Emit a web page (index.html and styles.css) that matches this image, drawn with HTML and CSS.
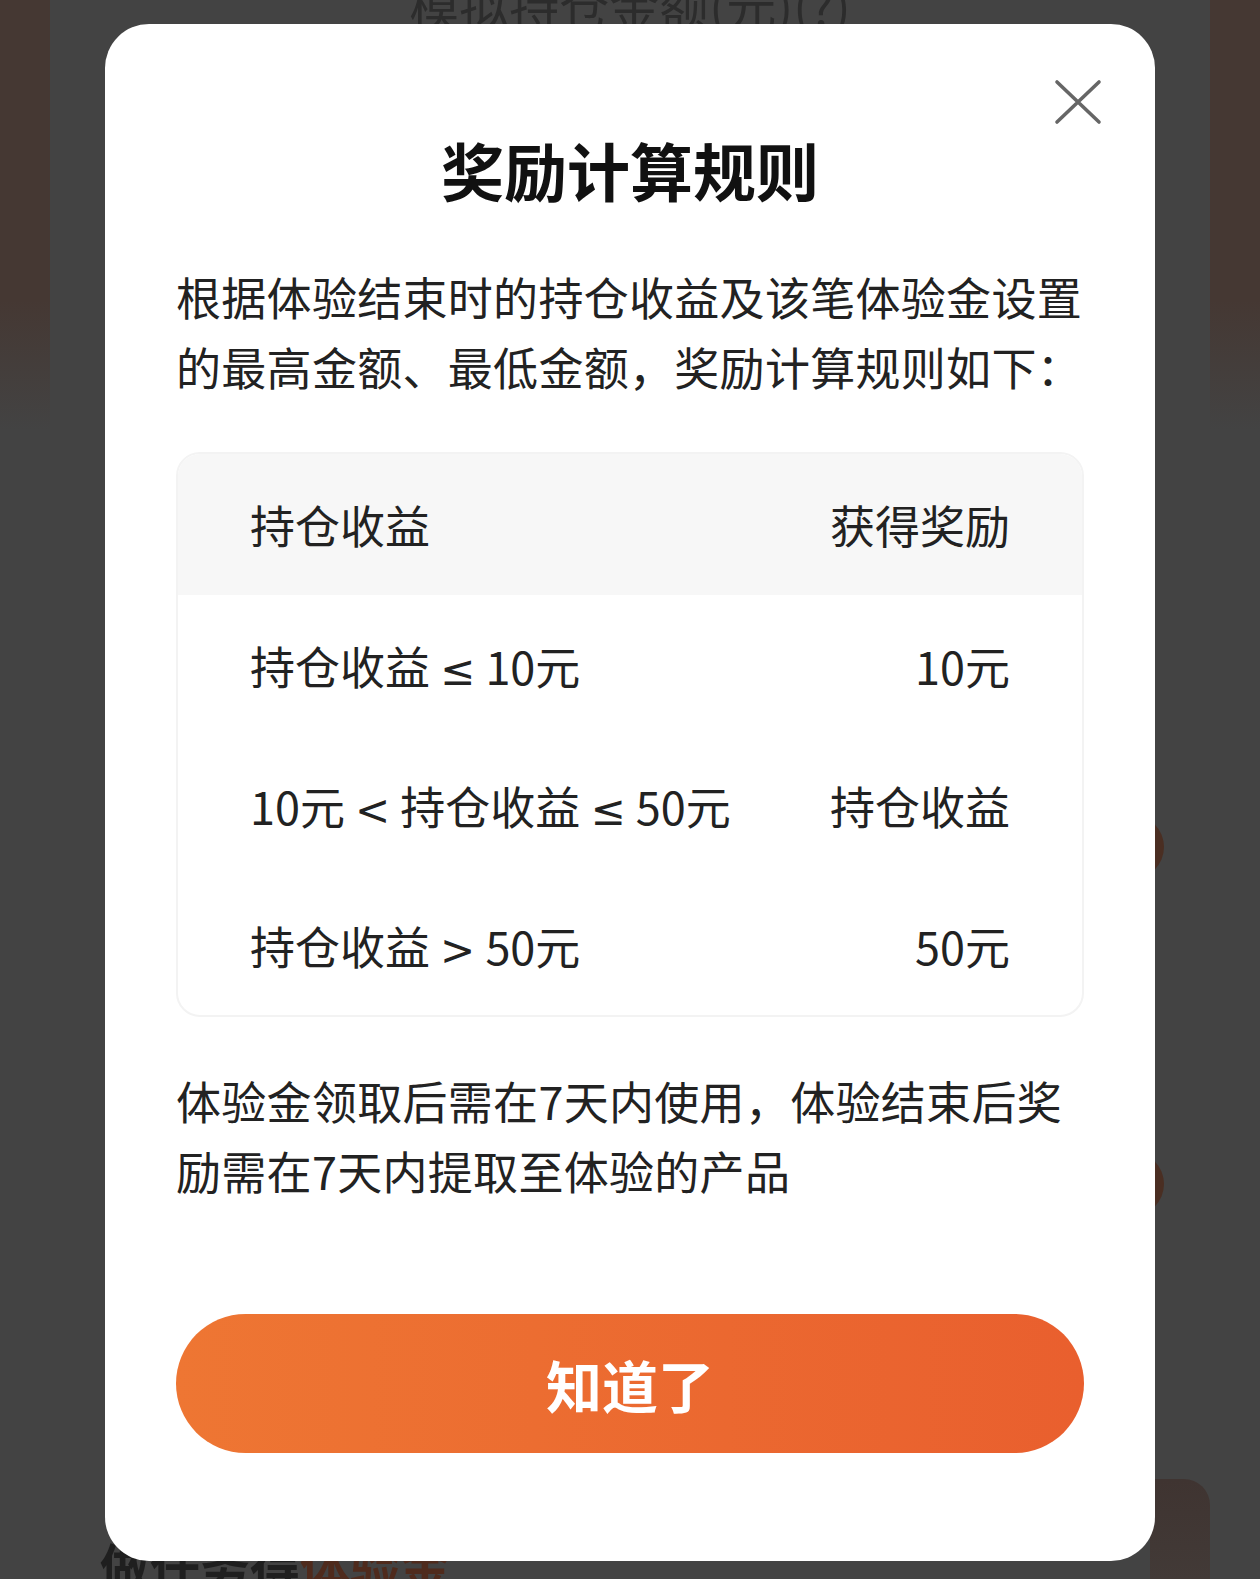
FILE: index.html
```html
<!DOCTYPE html>
<html lang="zh-CN">
<head>
<meta charset="utf-8">
<title>奖励计算规则</title>
<link rel="stylesheet" href="styles.css">
</head>
<body>
<div class="page">
  <div class="page-top">模拟持仓金额(元)(?)</div>
  <div class="page-list">
    <div class="list-row"><span class="dot"></span></div>
    <div class="list-row"><span class="dot"></span></div>
  </div>
  <div class="page-card">
    <div class="page-card-title"><span class="dark">做任务得</span><span class="brown">体验金</span></div>
    <span class="card-badge"></span>
  </div>
</div>
<div class="overlay">
  <div class="modal">
    <button class="close" aria-label="关闭">
      <svg width="48" height="48" viewBox="0 0 48 48"><path d="M3 3 L45 43 M45 3 L3 43" stroke="#666" stroke-width="3.6" stroke-linecap="round" fill="none"/></svg>
    </button>
    <h1 class="title">奖励计算规则</h1>
    <p class="text">根据体验结束时的持仓收益及该笔体验金设置的最高金额、最低金额，奖励计算规则如下：</p>
    <div class="table">
      <div class="row head"><span>持仓收益</span><span>获得奖励</span></div>
      <div class="row"><span>持仓收益 <span class="sym">≤</span> 10元</span><span>10元</span></div>
      <div class="row"><span>10元 <span class="sym">&lt;</span> 持仓收益 <span class="sym">≤</span> 50元</span><span>持仓收益</span></div>
      <div class="row"><span>持仓收益 <span class="sym">&gt;</span> 50元</span><span>50元</span></div>
    </div>
    <p class="text note">体验金领取后需在7天内使用，体验结束后奖励需在7天内提取至体验的产品</p>
    <button class="ok">知道了</button>
  </div>
</div>
</body>
</html>
```

FILE: styles.css
```css
html, body {
  margin: 0;
  padding: 0;
}
body {
  width: 1260px;
  height: 1579px;
  overflow: hidden;
  background-color: #434343;
  background-image:
    linear-gradient(to bottom, #453833 0px, #453833 300px, #434343 430px),
    linear-gradient(to bottom, #453833 0px, #453833 300px, #434343 430px);
  background-size: 50px 1579px, 50px 1579px;
  background-position: 0 0, 1210px 0;
  background-repeat: no-repeat;
  font-family: "Noto Sans CJK SC", "Noto Sans", sans-serif;
}
.page {
  height: 1579px;
  display: flex;
  flex-direction: column;
}
.page-top {
  margin-top: -28px;
  text-align: center;
  font-size: 50px;
  line-height: 64px;
  color: #2c2c2c;
}
.page-list {
  margin-top: 779px;
  display: flex;
  flex-direction: column;
  gap: 273px;
  padding: 0 96px 0 100px;
}
.list-row {
  display: flex;
  justify-content: flex-end;
}
.dot {
  width: 64px;
  height: 64px;
  border-radius: 50%;
  background: #4a2e22;
}
.page-card {
  margin: auto 50px 0 50px;
  height: 100px;
  display: flex;
  align-items: flex-end;
  justify-content: space-between;
  padding: 0 0 0 50px;
}
.page-card-title {
  margin-bottom: -20px;
  font-size: 50px;
  font-weight: 700;
  line-height: 70px;
}
.page-card-title .dark { color: #1f1f1f; }
.page-card-title .brown { color: #4f2b1d; }
.card-badge {
  width: 60px;
  height: 100px;
  border-radius: 0 26px 0 0;
  background: linear-gradient(to bottom, #3f3431, #423a37);
}

.overlay {
  position: fixed;
  inset: 0;
  display: flex;
  justify-content: center;
  align-items: flex-start;
  padding-top: 24px;
}
.modal {
  position: relative;
  width: 1050px;
  flex: none;
  box-sizing: border-box;
  background: #fff;
  border-radius: 44px;
  padding: 102px 71px 108px;
}
.close {
  position: absolute;
  top: 55px;
  right: 53px;
  width: 48px;
  height: 48px;
  padding: 0;
  border: 0;
  background: none;
  display: flex;
}
.title {
  margin: 0;
  text-align: center;
  font-size: 63px;
  line-height: 86px;
  font-weight: 700;
  color: #111;
}
.text {
  margin: 50px 0 0;
  font-size: 45px;
  line-height: 70px;
  color: #222;
  letter-spacing: 0.3px;
}
.table {
  margin-top: 50px;
  border: 2px solid #f3f3f3;
  border-radius: 24px;
  overflow: hidden;
}
.row {
  height: 140px;
  display: flex;
  align-items: center;
  justify-content: space-between;
  padding: 0 72px;
  font-size: 45px;
  color: #222;
}
.row.head {
  background: #f7f7f7;
  height: 141px;
}
.sym {
  font-family: "DejaVu Sans", sans-serif;
  font-size: 42px;
}
.note {
  margin-top: 49px;
  line-height: 70px;
}
.ok {
  display: block;
  width: 100%;
  height: 139px;
  margin-top: 108px;
  border: 0;
  border-radius: 70px;
  background: linear-gradient(to right, #ee7633, #e95f2e);
  color: #fff;
  font-family: inherit;
  font-size: 56px;
  font-weight: 700;
}
```
